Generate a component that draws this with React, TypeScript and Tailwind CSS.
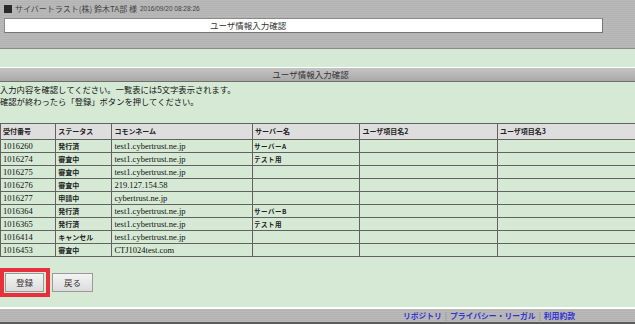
import React from "react";

const rows: [string, string, string, string][] = [
  ["1016260", "発行済", "test1.cybertrust.ne.jp", "サーバーA"],
  ["1016274", "審査中", "test1.cybertrust.ne.jp", "テスト用"],
  ["1016275", "審査中", "test1.cybertrust.ne.jp", ""],
  ["1016276", "審査中", "219.127.154.58", ""],
  ["1016277", "申請中", "cybertrust.ne.jp", ""],
  ["1016364", "発行済", "test1.cybertrust.ne.jp", "サーバーB"],
  ["1016365", "発行済", "test1.cybertrust.ne.jp", "テスト用"],
  ["1016414", "キャンセル", "test1.cybertrust.ne.jp", ""],
  ["1016453", "審査中", "CTJ1024test.com", ""],
];

const widths = [55, 56, 140, 107, 137, 137, 100];
const headers = ["受付番号", "ステータス", "コモンネーム", "サーバー名", "ユーザ項目名2", "ユーザ項目名3", "ユーザ項目名4"];

const stripe =
  "bg-[repeating-linear-gradient(180deg,#bababa_0px,#bababa_1px,#b2b2b2_1px,#b2b2b2_2px)]";

const cell = "border border-[#626262] p-0";

export default function App() {
  return (
    <div className="w-[635px] h-[324px] overflow-hidden bg-[#d5e9d5] flex flex-col font-['Noto_Sans_CJK_JP',sans-serif] text-[#222]">
      {/* header */}
      <div className={`h-[49px] border-b border-[#8a8a8a] ${stripe}`}>
        <div className="h-[18px] flex items-center pl-[4px] gap-[3px]">
          <div className="w-[8px] h-[8px] bg-[#2a2a2a]" />
          <span className="text-[8px] text-[#444] leading-none">サイバートラスト(株) 鈴木TA部 様</span>
          <span className="text-[6.5px] text-[#444] leading-none font-['Liberation_Sans',sans-serif]">2016/09/20 08:28:26</span>
        </div>
        <div className="ml-[4px] w-[599px] h-[15px] bg-white border border-[#8c8c8c] border-r-[#777] border-b-[#777] flex items-center pl-[205px]">
          <span className="text-[8.5px] leading-none text-[#333]">ユーザ情報入力確認</span>
        </div>
      </div>
      <div className="h-[18px]" />
      <div className="h-px bg-white" />
      <div className="h-[14px] bg-[linear-gradient(180deg,#c4c4c4,#a9a9a9)] border-b border-[#6f6f6f] flex items-center justify-center">
        <span className="text-[8.5px] leading-none text-[#333] pr-[14px]">ユーザ情報入力確認</span>
      </div>
      <div className="pt-[1px] text-[8.3px] leading-[12px] text-[#111]">
        <div>入力内容を確認してください。一覧表には5文字表示されます。</div>
        <div>確認が終わったら「登録」ボタンを押してください。</div>
      </div>
      <div className="mt-[16px] overflow-hidden">
        <table className="table-fixed border-collapse w-[736px]">
          <colgroup>
            {widths.map((w, i) => (
              <col key={i} style={{ width: w }} />
            ))}
          </colgroup>
          <thead>
            <tr className="h-[16px]">
              {headers.map((h, i) => (
                <th
                  key={i}
                  className={`${cell} bg-[#dedede] text-left font-bold text-[7px] leading-none pl-[2px] text-[#222]`}
                >
                  {h}
                </th>
              ))}
            </tr>
          </thead>
          <tbody>
            {rows.map((r, ri) => (
              <tr key={ri} className="h-[13px]">
                <td className={`${cell} pl-[2px] text-[8.5px] leading-none font-['Liberation_Serif',serif] text-[#111]`}>{r[0]}</td>
                <td className={`${cell} pl-[2px] text-[7px] leading-none font-bold text-[#222]`}>{r[1]}</td>
                <td className={`${cell} pl-[2px] text-[8.5px] leading-none font-['Liberation_Serif',serif] text-[#111]`}>{r[2]}</td>
                <td className={`${cell} pl-[1px] text-[6.5px] leading-none tracking-[0.5px] font-bold text-[#222]`}>{r[3]}</td>
                <td className={cell} />
                <td className={cell} />
                <td className={cell} />
              </tr>
            ))}
          </tbody>
        </table>
      </div>
      <div className="mt-[11px] flex items-start">
        <div className="border-4 border-[#e8303c] p-[1px] pr-[2px]">
          <button className="w-[39px] h-[19px] bg-[linear-gradient(180deg,#f4f4f4,#dcdcdc)] border border-[#9a9a9a] text-[8.5px] leading-none text-[#333] flex items-center justify-center">
            登録
          </button>
        </div>
        <button className="ml-[2px] mt-[5px] w-[41px] h-[19px] bg-[linear-gradient(180deg,#f4f4f4,#dcdcdc)] border border-[#9a9a9a] text-[8.5px] leading-none text-[#333] flex items-center justify-center">
          戻る
        </button>
      </div>
      <div className="mt-auto border-t-2 border-white">
        <div className={`h-[15px] border-b-2 border-[#5a5a5a] flex items-center justify-end pr-[60px] ${stripe}`}>
          <span className="text-[7.8px] leading-none font-bold text-[#3535d0]">リポジトリ</span>
          <span className="text-[8px] leading-none text-[#8a8a9a] mx-[3px]">|</span>
          <span className="text-[7.8px] leading-none font-bold text-[#3535d0]">プライバシー・リーガル</span>
          <span className="text-[8px] leading-none text-[#8a8a9a] mx-[3px]">|</span>
          <span className="text-[7.8px] leading-none font-bold text-[#3535d0]">利用約款</span>
        </div>
      </div>
    </div>
  );
}
